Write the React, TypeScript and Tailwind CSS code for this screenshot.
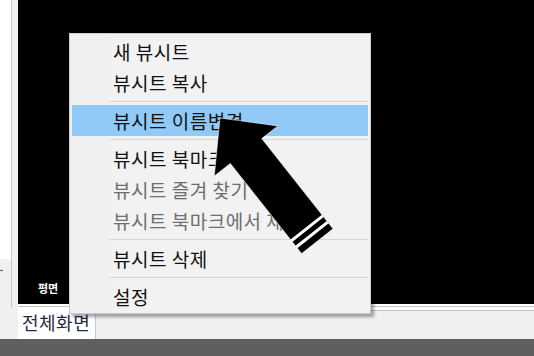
import React from "react";

type MenuEntry =
  | { kind: "item"; label: string; disabled?: boolean; active?: boolean }
  | { kind: "sep" };

const menu: MenuEntry[] = [
  { kind: "item", label: "새 뷰시트" },
  { kind: "item", label: "뷰시트 복사" },
  { kind: "sep" },
  { kind: "item", label: "뷰시트 이름변경", active: true },
  { kind: "sep" },
  { kind: "item", label: "뷰시트 북마크 추가" },
  { kind: "item", label: "뷰시트 즐겨 찾기", disabled: true },
  { kind: "item", label: "뷰시트 북마크에서 제거", disabled: true },
  { kind: "sep" },
  { kind: "item", label: "뷰시트 삭제" },
  { kind: "sep" },
  { kind: "item", label: "설정" },
];

function ContextMenu() {
  return (
    <div className="absolute left-[69px] top-[33px] w-[302px] border border-[#cccccc] bg-[linear-gradient(to_right,#f0f0f0_39px,#f2f2f2_39px)] pt-[2px] pb-[1px] shadow-[3px_3px_3px_rgba(0,0,0,0.35)]">
      {menu.map((m, i) =>
        m.kind === "sep" ? (
          <div key={i} className="py-[3px] pl-[39px] pr-[2px]">
            <div className="h-px bg-[#d7d7d7]" />
          </div>
        ) : (
          <div
            key={i}
            className={`mx-[2px] flex h-[31px] items-center pl-[41px] text-[19px] leading-none tracking-[0.5px] whitespace-nowrap ${
              m.active ? "bg-[#91c9f7]" : ""
            } ${m.disabled ? "text-[#6e6e6e]" : "text-[#111111]"}`}
          >
            {m.label}
          </div>
        )
      )}
    </div>
  );
}

// big black pointer drawn over the menu
function Arrow() {
  return (
    <svg className="pointer-events-none absolute inset-0" width="534" height="356" viewBox="0 0 534 356">
      <polygon
        points="220,118 277.8,125.9 261.7,138.6 333,228.8 301.6,253.6 230.3,163.4 214.3,176.1"
        fill="#000"
        stroke="#ffffff"
        strokeOpacity="0.55"
        strokeWidth="1"
      />
      <polygon points="321.9,214.7 323.7,217.1 292.3,241.9 290.5,239.5" fill="#fff" />
      <polygon points="326.8,221 328.7,223.35 297.3,248.15 295.4,245.8" fill="#fff" />
    </svg>
  );
}

export default function App() {
  return (
    <div className="relative flex h-[356px] w-[534px] flex-col overflow-hidden bg-[#f0f0f0] font-['Malgun_Gothic','Noto_Sans_CJK_KR',sans-serif]">
      <div className="flex h-[339px]">
        {/* left pane edge */}
        <div className="w-[18px] shrink-0">
          <div className="flex h-[308px] w-[12px] flex-col border-r border-[#c8c8c8]">
            <div className="h-[259px] bg-white" />
            <div className="flex-1 bg-[#f0f0f0] pt-[11px]">
              <div className="h-px w-[3px] bg-[#555]" />
            </div>
          </div>
        </div>

        {/* view area */}
        <div className="flex min-w-0 flex-1 flex-col">
          <div className="flex h-[304px] flex-col justify-end bg-black pb-[10px] pl-[20px]">
            <span className="text-[11px] font-bold leading-none text-white">평면</span>
          </div>
          <div className="h-[2px] bg-white" />
          <div className="h-px bg-[#c4c4c4]" />
          <div className="flex flex-1">
            <div className="flex w-[78px] items-center border-r border-[#c8c8c8] bg-white pb-[2px] pl-[4px] text-[18px] leading-none tracking-[0.5px] text-[#1f2b45]">
              전체화면
            </div>
            <div className="flex flex-1 flex-col">
              <div className="h-[3px] bg-white" />
              <div className="h-px bg-[#c4c4c4]" />
              <div className="flex-1 bg-[#f0f0f0]" />
            </div>
          </div>
        </div>
      </div>
      <div className="flex-1 bg-[#5f5f5f]" />

      <ContextMenu />
      <Arrow />
    </div>
  );
}
